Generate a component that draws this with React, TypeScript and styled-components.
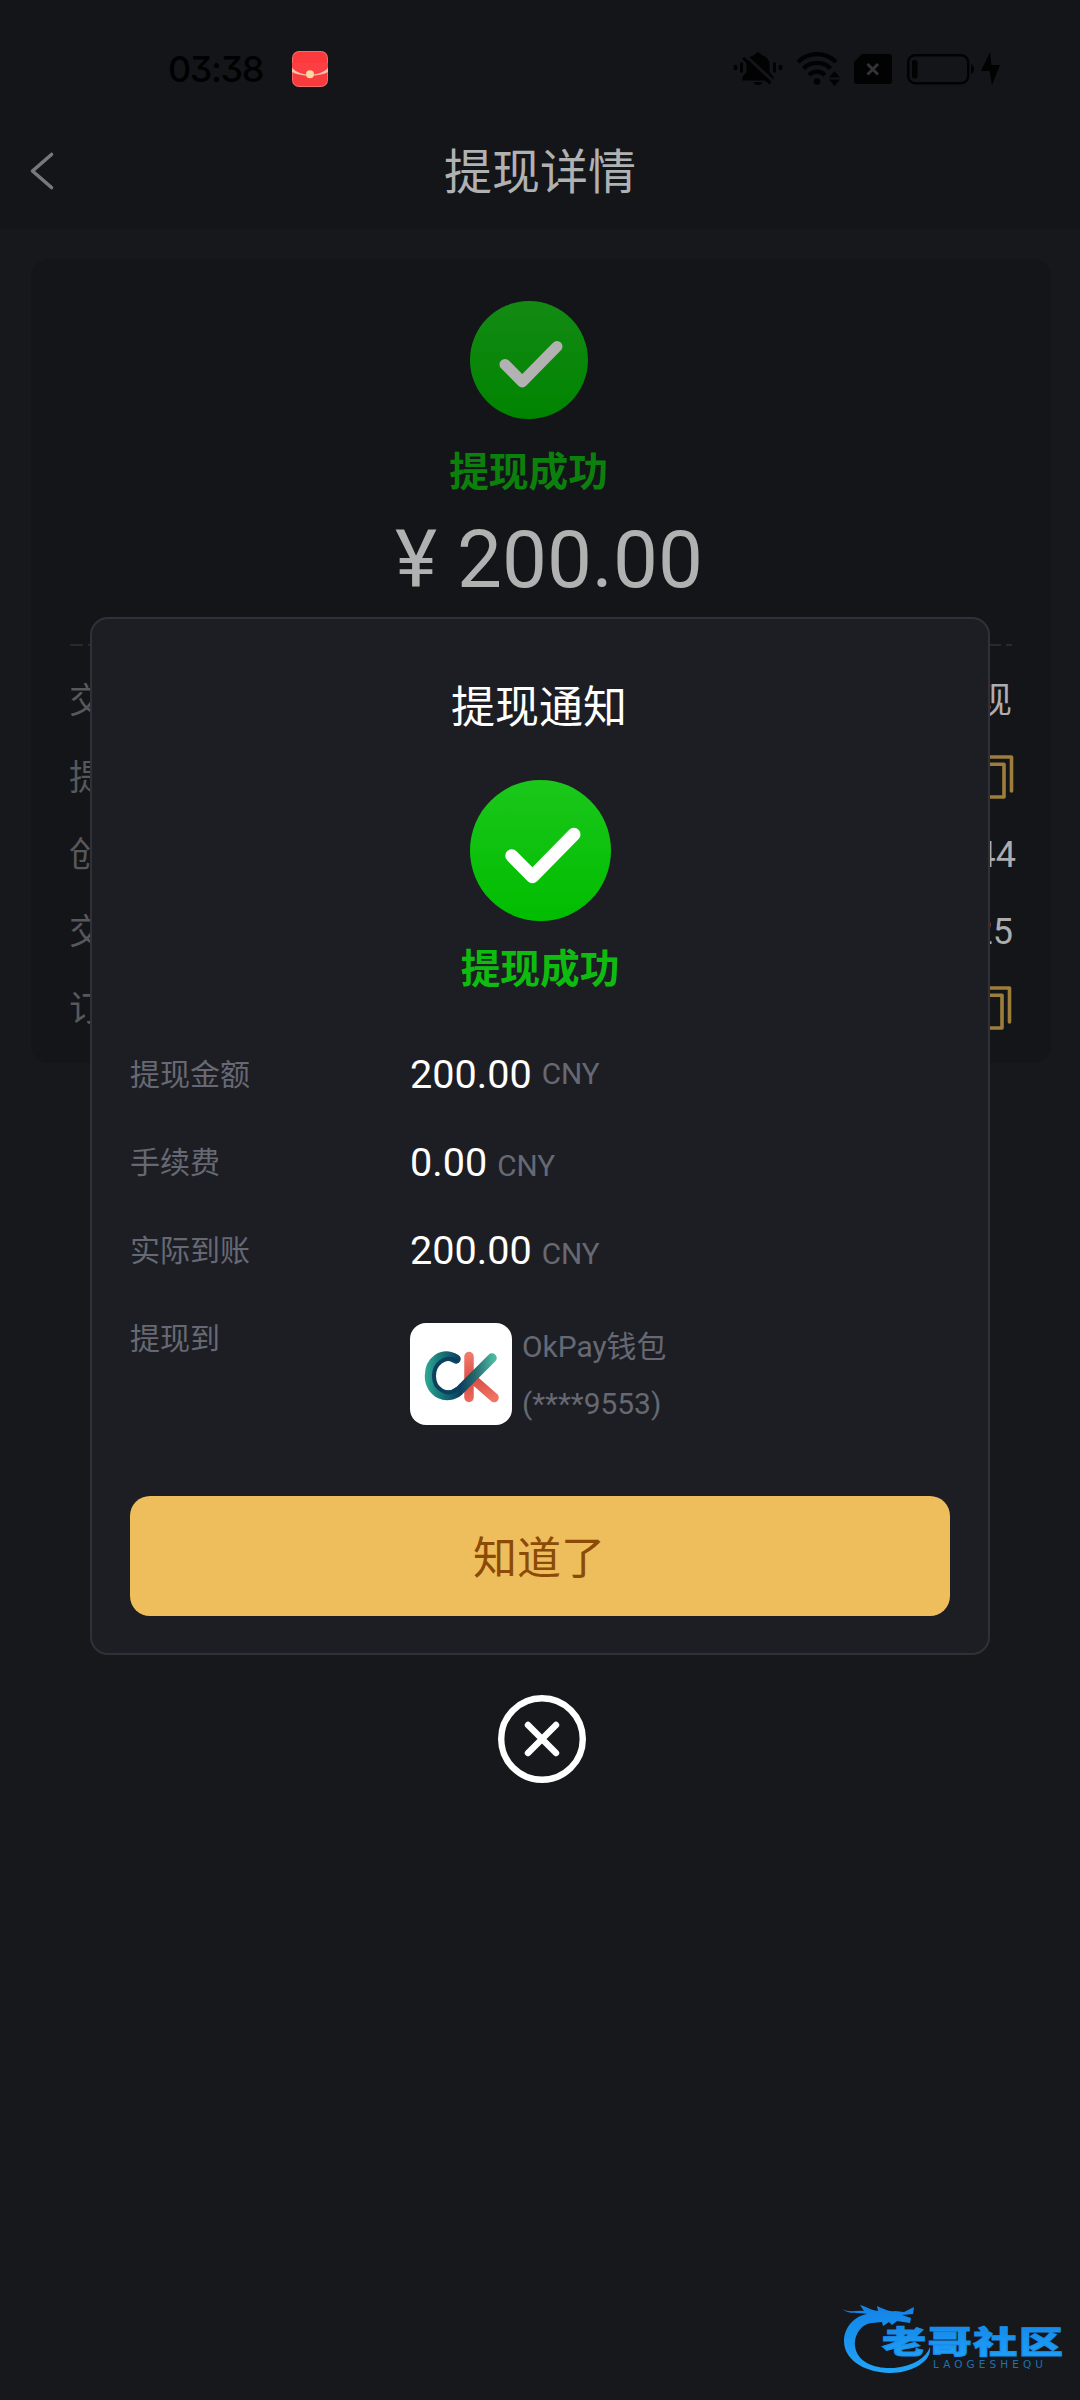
import React from 'react';
import styled, { createGlobalStyle } from 'styled-components';

const cjk = `'Noto Sans CJK SC', 'Noto Sans', sans-serif`;
const latin = `Roboto, 'Noto Sans CJK SC', sans-serif`;

const GlobalStyle = createGlobalStyle`
  * { box-sizing: border-box; }
  html, body { margin: 0; padding: 0; background: #17181b; }
  body { font-family: ${cjk}; }
  svg { display: block; flex: none; }
`;

const Screen = styled.div`
  position: relative;
  width: 1080px;
  height: 2400px;
  overflow: hidden;
  background: #17181b;
`;

const Header = styled.header`
  height: 229px;
  background: #141519;
`;

const StatusBar = styled.div`
  display: flex;
  align-items: center;
  height: 138px;
  padding: 0 80px 0 168px;
`;

const Clock = styled.span`
  width: 124px;
  font: 500 36px/40px Inter, sans-serif;
  font-feature-settings: 'cv09';
  letter-spacing: -1.4px;
  color: #010102;
`;

const StatusIcons = styled.div`
  display: flex;
  align-items: center;
  margin-left: auto;
`;

const NavBar = styled.nav`
  display: grid;
  grid-template-columns: 120px 1fr 120px;
  align-items: center;
  height: 66px;
`;

const BackButton = styled.button`
  padding: 0 0 0 28px;
  border: 0;
  background: none;
`;

const PageTitle = styled.h1`
  margin: 0 0 5px;
  text-align: center;
  font-weight: 400;
  font-size: 48px;
  line-height: 61px;
  color: #b0b1b3;
`;

const Card = styled.section`
  display: flex;
  flex-direction: column;
  align-items: center;
  width: 1020px;
  height: 804px;
  margin: 30px 0 0 31px;
  padding: 42px 39px 0;
  border-radius: 18px;
  background: #141519;
`;

const StatusText = styled.div<{ $dim?: boolean }>`
  font-weight: 700;
  font-size: 39.7px;
  line-height: 56px;
  color: ${(p) => (p.$dim ? '#0b800c' : '#0ebc0f')};
`;

const CardStatus = styled.div`
  display: flex;
  flex-direction: column;
  align-items: center;
  gap: 22px;
  margin-right: 25px;
`;

const Amount = styled.div`
  margin: 16px 0 0 16px;
  font: 400 80px/94px ${latin};
  color: #b1b1b1;
`;

const Divider = styled.div`
  width: 942px;
  height: 2px;
  margin-top: 37px;
  background: repeating-linear-gradient(90deg, #292a2d 0 13px, transparent 13px 18px);
`;

const InfoList = styled.div`
  width: 942px;
  padding-top: 16px;
`;

const InfoRow = styled.div`
  display: flex;
  align-items: center;
  justify-content: space-between;
  height: 77px;
  font-size: 35px;
  line-height: 50px;
`;

const InfoLabel = styled.span`
  margin: -5px 0 0 -1px;
  color: #57585b;
`;

const InfoValue = styled.span<{ $shift?: number }>`
  display: flex;
  align-items: center;
  gap: 16px;
  margin-right: ${(p) => p.$shift ?? 0}px;
  font-family: ${latin};
  font-size: 36px;
  color: #adadaf;
`;

const Overlay = styled.div`
  position: absolute;
  inset: 0;
  display: flex;
  flex-direction: column;
  align-items: center;
  padding-top: 617px;
`;

const Dialog = styled.section`
  display: flex;
  flex-direction: column;
  align-items: center;
  width: 900px;
  height: 1038px;
  padding: 53px 38px 0;
  border: 2px solid #303138;
  border-radius: 18px;
  background: #1d1e24;
`;

const DialogTitle = styled.h2`
  margin: 0 2px 44px 0;
  font-weight: 400;
  font-size: 44px;
  line-height: 64px;
  color: #fff;
`;

const DialogStatus = styled.div`
  display: flex;
  flex-direction: column;
  align-items: center;
  gap: 17px;
`;

const Details = styled.div`
  display: flex;
  flex-direction: column;
  width: 820px;
  margin-top: 36px;
`;

const DetailRow = styled.div<{ $tall?: boolean }>`
  display: grid;
  grid-template-columns: 280px 1fr;
  height: ${(p) => (p.$tall ? 202 : 88)}px;
`;

const DetailLabel = styled.span`
  font-size: 30px;
  line-height: 84px;
  color: #666973;
`;

const Money = styled.span`
  display: flex;
  align-items: baseline;
  gap: 10px;
  font: 400 39.6px/90px ${latin};
  color: #fff;
`;

const Unit = styled.small<{ $raise?: number }>`
  position: relative;
  top: ${(p) => -(p.$raise ?? 0)}px;
  font-size: 29.7px;
  color: #666973;
`;

const Wallet = styled.div`
  display: flex;
  gap: 10px;
  padding-top: 29px;
`;

const WalletLogo = styled.div`
  width: 102px;
  height: 102px;
  border-radius: 16px;
  background: #fff;
`;

const WalletName = styled.div`
  margin-top: -5px;
  font: 400 29.9px/57px ${latin};
  color: #666973;
`;

const ConfirmButton = styled.button`
  width: 820px;
  height: 120px;
  padding: 0 2px 2px 0;
  border: 0;
  border-radius: 20px;
  background: #efbe5c;
  font: 400 44px/118px ${cjk};
  color: #8b4a06;
`;

const CloseButton = styled.button`
  margin: 40px 0 0 4px;
  padding: 0;
  border: 0;
  background: none;
`;

const Watermark = styled.div`
  position: absolute;
  left: 840px;
  top: 2300px;
  width: 228px;
  height: 80px;
`;

const CheckBadge = ({ size, dim }: { size: number; dim?: boolean }) => (
  <svg width={size} height={size} viewBox="0 0 140 140">
    <defs>
      <linearGradient id={dim ? 'gd' : 'gl'} x1="0" y1="0" x2="0" y2="1">
        <stop offset="0" stopColor={dim ? '#138a14' : '#1bc71b'} />
        <stop offset="1" stopColor={dim ? '#008400' : '#00bd00'} />
      </linearGradient>
    </defs>
    <circle cx="70" cy="70" r="70" fill={`url(#${dim ? 'gd' : 'gl'})`} />
    <path d="M41.5 75.2 62 96 103.200 54" fill="none" stroke={dim ? '#b2b2b2' : '#fff'} strokeWidth="13" strokeLinecap="round" strokeLinejoin="round" />
  </svg>
);

const CopyIcon = () => (
  <svg width="38" height="46" viewBox="0 0 38 46" fill="none" stroke="#9c7d3b" strokeWidth="3.600" strokeLinejoin="round" strokeLinecap="round">
    <path d="M8 2H35.500V36" />
    <path d="M2 9.300H28V42H2Z" />
  </svg>
);

const RedPacket = () => (
  <svg width="36" height="36" viewBox="0 0 36 36">
    <rect width="36" height="36" rx="7" fill="#f96a66" />
    <rect x="1" y="1" width="34" height="34" rx="6" fill="#fb3a3e" />
    <path d="M0 17C9 26 27 26 36 17V21C27 26 9 26 0 21Z" fill="#ffc1ac" />
    <path d="M0 16Q18 30 36 16V12H0Z" fill="#fc3f43" />
    <circle cx="18" cy="23.3" r="4" fill="#ffd7a3" />
  </svg>
);

const StatusGlyphs = () => (
  <svg width="268" height="36" viewBox="732 51 268 36" fill="#020203">
    <path d="M758 52.500c-2 0-3 1-3 2.500-6 1-8.500 5-8.500 10v7l-4 5v3.500h31v-3.500l-4-5v-7c0-5-2.500-9-8.500-10 0-1.500-1-2.500-3-2.500Z" />
    <path d="M754 82h8a4 3 0 0 1-8 0Z" />
    <path d="M745 55 774 82" stroke="#141519" strokeWidth="3" />
    <path d="M743 58 770.500 83.500" stroke="#020203" strokeWidth="3" />
    <path d="M741.500 62.500V72.500M774.500 62.500V72.500" stroke="#020203" strokeWidth="3" />
    <ellipse cx="735.500" cy="67.500" rx="2" ry="2.800" />
    <ellipse cx="780.500" cy="67.500" rx="2" ry="2.800" />
    <g fill="none" stroke="#020203" strokeWidth="4.400">
      <path d="M798 62C808.500 51.500 825.500 51.500 836 62" />
      <path d="M803.500 68.500C811 61 823 61 830.500 68.500" />
      <path d="M809 75C813.500 70.500 820.500 70.500 825 75" />
    </g>
    <circle cx="817" cy="81.500" r="3.300" />
    <path d="M834.500 71 840 77.500H829Z" />
    <path d="M834.500 86 840 79.500H829Z" />
    <path d="M862 54H889a3 3 0 0 1 3 3V81a3 3 0 0 1-3 3H857a3 3 0 0 1-3-3V62Z" />
    <path d="M867.500 64 878 74.500M878 64 867.500 74.500" stroke="#323336" strokeWidth="3" />
    <rect x="908.200" y="55.200" width="60" height="28" rx="7" fill="none" stroke="#020203" strokeWidth="2.400" />
    <rect x="912" y="60" width="5.500" height="18.500" rx="2.500" />
    <path d="M971 64c4 2 4 8 0 10Z" />
    <path d="M990 52 981 71h8.500L992 85 1000 65h-8.500Z" />
  </svg>
);

const OkLogo = () => (
  <svg width="102" height="102" viewBox="0 0 102 102" fill="none" strokeLinecap="round">
    <defs>
      <linearGradient id="ring" gradientUnits="userSpaceOnUse" x1="16" y1="50" x2="84" y2="50">
        <stop offset="0" stopColor="#2fa692" />
        <stop offset=".22" stopColor="#16777a" />
        <stop offset=".5" stopColor="#0b3f5e" />
        <stop offset=".72" stopColor="#23696f" />
        <stop offset="1" stopColor="#4db9a2" />
      </linearGradient>
      <linearGradient id="leg" gradientUnits="userSpaceOnUse" x1="60" y1="30" x2="78" y2="78">
        <stop offset="0" stopColor="#f07b6b" />
        <stop offset=".5" stopColor="#d94c45" />
        <stop offset="1" stopColor="#ef7565" />
      </linearGradient>
    </defs>
    <path d="M59 33.500V74.500" stroke="url(#leg)" strokeWidth="9.500" />
    <path d="M64 57 84 74.500" stroke="url(#leg)" strokeWidth="9.500" />
    <path d="M46 36C32 28 19.500 38 19.500 53C19.500 70 37 78 49 68L82 35" stroke="url(#ring)" strokeWidth="9.500" strokeLinejoin="round" />
    <path d="M46 37.500C35 32 24 41 24 53C24 66 37 74 47 66" stroke="#0b405f" strokeWidth="4" />
  </svg>
);

const WatermarkArt = () => (
  <svg width="228" height="80" viewBox="840 2300 228 80">
    <defs>
      <linearGradient id="wm" x1="0" y1="0" x2="0" y2="1">
        <stop offset="0" stopColor="#1383e6" />
        <stop offset="1" stopColor="#20a5f8" />
      </linearGradient>
    </defs>
    <path
      d="M842 2309C849 2313 856 2310 864 2311L860 2305C867 2307 873 2311 878 2311L877 2306C884 2309 889 2312 895 2311L904 2312 914 2307 913 2314 902 2315 911 2318 910 2323 897 2321 892 2325 889 2322 883 2326 882 2322 872 2323C861 2324 854 2335 855 2346C857 2363 876 2369 894 2368C913 2366 926 2358 930 2347C932 2362 911 2373 890 2373C861 2372 844 2358 844 2341C844 2327 855 2316 867 2314C859 2312 849 2315 842 2309Z"
      fill="url(#wm)"
    />
    <text transform="translate(882 2353) scale(1 .7)" fontFamily={cjk} fontSize="44" fontWeight="900" textLength="181" fill="url(#wm)" stroke="#198fee" strokeWidth="1.500">
      老哥社区
    </text>
    <text x="933" y="2367.500" fontFamily="'DejaVu Sans', sans-serif" fontSize="10.500" textLength="110" fill="#1c73b0">
      LAOGESHEQU
    </text>
  </svg>
);

const details = [
  { label: '提现金额', value: '200.00', raise: 4 },
  { label: '手续费', value: '0.00', raise: 0 },
  { label: '实际到账', value: '200.00', raise: 0 },
];

export default function App() {
  return (
    <Screen>
      <GlobalStyle />
      <Header>
        <StatusBar>
          <Clock>03:38</Clock>
          <RedPacket />
          <StatusIcons>
            <StatusGlyphs />
          </StatusIcons>
        </StatusBar>
        <NavBar>
          <BackButton aria-label="返回">
            <svg width="28" height="40" viewBox="0 0 28 40" fill="none" stroke="#77787b" strokeWidth="3.600" strokeLinecap="round" strokeLinejoin="round">
              <path d="M23.500 3.500 4.500 20 23.500 36.500" />
            </svg>
          </BackButton>
          <PageTitle>提现详情</PageTitle>
        </NavBar>
      </Header>

      <Card>
        <CardStatus>
          <CheckBadge size={118} dim />
          <StatusText $dim>提现成功</StatusText>
        </CardStatus>
        <Amount>¥ 200.00</Amount>
        <Divider />
        <InfoList>
          <InfoRow>
            <InfoLabel>交易类型</InfoLabel>
            <InfoValue>提现</InfoValue>
          </InfoRow>
          <InfoRow>
            <InfoLabel>提现金额</InfoLabel>
            <InfoValue $shift={-2}><CopyIcon /></InfoValue>
          </InfoRow>
          <InfoRow>
            <InfoLabel>创建时间</InfoLabel>
            <InfoValue $shift={-4}>03:36:44</InfoValue>
          </InfoRow>
          <InfoRow>
            <InfoLabel>交易时间</InfoLabel>
            <InfoValue $shift={-1}>03:38:25</InfoValue>
          </InfoRow>
          <InfoRow>
            <InfoLabel>订单号</InfoLabel>
            <InfoValue><CopyIcon /></InfoValue>
          </InfoRow>
        </InfoList>
      </Card>

      <Overlay>
        <Dialog>
          <DialogTitle>提现通知</DialogTitle>
          <DialogStatus>
            <CheckBadge size={141} />
            <StatusText>提现成功</StatusText>
          </DialogStatus>
          <Details>
            {details.map((d) => (
              <DetailRow key={d.label}>
                <DetailLabel>{d.label}</DetailLabel>
                <Money>
                  {d.value}
                  <Unit $raise={d.raise}>CNY</Unit>
                </Money>
              </DetailRow>
            ))}
            <DetailRow $tall>
              <DetailLabel>提现到</DetailLabel>
              <Wallet>
                <WalletLogo>
                  <OkLogo />
                </WalletLogo>
                <WalletName>
                  OkPay钱包
                  <br />
                  (****9553)
                </WalletName>
              </Wallet>
            </DetailRow>
          </Details>
          <ConfirmButton>知道了</ConfirmButton>
        </Dialog>
        <CloseButton aria-label="关闭">
          <svg width="88" height="88" viewBox="0 0 88 88" fill="none" stroke="#fff" strokeWidth="6.400" strokeLinecap="round">
            <circle cx="44" cy="44" r="40.800" />
            <path d="M30 30 58 58M58 30 30 58" />
          </svg>
        </CloseButton>
      </Overlay>

      <Watermark>
        <WatermarkArt />
      </Watermark>
    </Screen>
  );
}
